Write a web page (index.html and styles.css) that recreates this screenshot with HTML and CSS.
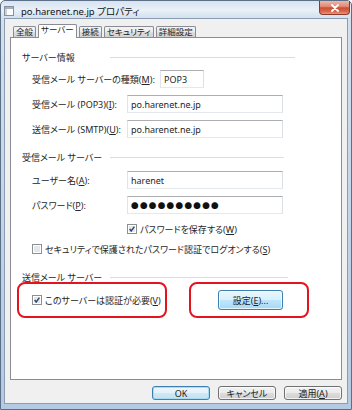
FILE: index.html
```html
<!DOCTYPE html>
<html lang="ja">
<head>
<meta charset="utf-8">
<title>po.harenet.ne.jp プロパティ</title>
<link rel="stylesheet" href="styles.css">
</head>
<body>
<div class="window">
  <div class="titlebar">
    <svg class="appicon" width="10" height="10" viewBox="0 0 10 10">
      <rect x="0.5" y="0.5" width="9" height="9" fill="#fdfdfd" stroke="#8a8f96"/>
      <rect x="1" y="1" width="8" height="2" fill="#9fb3c8"/>
      <rect x="1" y="3" width="2" height="6" fill="#c9d3dd"/>
    </svg>
    <span class="title">po.harenet.ne.jp プロパティ</span>
    <div class="close">
      <svg width="10" height="8" viewBox="0 0 10 8"><path d="M2 1 L8 7 M8 1 L2 7" stroke="#fff" stroke-width="1.8" stroke-linecap="round"/></svg>
    </div>
  </div>
  <div class="client">
    <div class="tabs">
      <div class="tab">全般</div>
      <div class="tab active">サーバー</div>
      <div class="tab">接続</div>
      <div class="tab">セキュリティ</div>
      <div class="tab">詳細設定</div>
    </div>
    <div class="panel">
      <div class="legend"><span class="legend-text">サーバー情報</span><span class="legend-line l1"></span></div>
      <div class="row">
        <span class="label wide">受信メール サーバーの種類(<u>M</u>):</span>
        <div class="field short">POP3</div>
      </div>
      <div class="row">
        <span class="label">受信メール (POP3)(<u>I</u>):</span>
        <div class="field">po.harenet.ne.jp</div>
      </div>
      <div class="row">
        <span class="label">送信メール (SMTP)(<u>U</u>):</span>
        <div class="field">po.harenet.ne.jp</div>
      </div>

      <div class="legend gap13"><span class="legend-text">受信メール サーバー</span><span class="legend-line l2"></span></div>
      <div class="row gap8">
        <span class="label">ユーザー名(<u>A</u>):</span>
        <div class="field">harenet</div>
      </div>
      <div class="row">
        <span class="label">パスワード(<u>P</u>):</span>
        <div class="field dots">●●●●●●●●●●</div>
      </div>
      <div class="check-row save">
        <svg class="cb" width="10" height="10" viewBox="0 0 10 10"><rect x="0.5" y="0.5" width="9" height="9" fill="#fff" stroke="#8e8f8f"/><rect x="2" y="2" width="6" height="6" fill="#e3e8ee"/><path d="M2.6 5 L4.2 7 L7.4 2.6" stroke="#32466e" stroke-width="1.4" fill="none"/></svg>
        <span>パスワードを保存する(<u>W</u>)</span>
      </div>
      <div class="check-row spa">
        <svg class="cb" width="10" height="10" viewBox="0 0 10 10"><rect x="0.5" y="0.5" width="9" height="9" fill="#fff" stroke="#8e8f8f"/><rect x="2" y="2" width="6" height="6" fill="#e3e8ee"/></svg>
        <span>セキュリティで保護されたパスワード認証でログオンする(<u>S</u>)</span>
      </div>

      <div class="legend gap16"><span class="legend-text">送信メール サーバー</span><span class="legend-line l3"></span></div>
      <div class="send-row">
        <div class="mark left">
          <div class="check-row">
            <svg class="cb" width="10" height="10" viewBox="0 0 10 10"><rect x="0.5" y="0.5" width="9" height="9" fill="#fff" stroke="#8e8f8f"/><rect x="2" y="2" width="6" height="6" fill="#e3e8ee"/><path d="M2.6 5 L4.2 7 L7.4 2.6" stroke="#32466e" stroke-width="1.4" fill="none"/></svg>
            <span>このサーバーは認証が必要(<u>V</u>)</span>
          </div>
        </div>
        <div class="mark right">
          <div class="btn hover settings">設定(<u>E</u>)...</div>
        </div>
      </div>
    </div>
    <div class="buttons">
      <div class="btn default">OK</div>
      <div class="btn">キャンセル</div>
      <div class="btn">適用(<u>A</u>)</div>
    </div>
  </div>
</div>
</body>
</html>
```

FILE: styles.css
```css
* { box-sizing: border-box; }

html, body {
  margin: 0;
  width: 352px;
  height: 410px;
  overflow: hidden;
  background: #fff;
}

body {
  font-family: "Noto Sans", "Noto Sans CJK JP", sans-serif;
  font-size: 9px;
  color: #262626;
  font-feature-settings: "palt";
}

u { text-decoration: underline; text-underline-offset: 1px; }

.window {
  width: 352px;
  height: 410px;
  display: flex;
  flex-direction: column;
  border: 1px solid #5b6f86;
  border-radius: 5px 5px 0 0;
  background: linear-gradient(180deg, #d8e3f0 0px, #e9f0f8 9px, #d3e0ee 17px, #bfd3e8 60%, #b3cae3 100%);
}

.titlebar {
  height: 17px;
  display: flex;
  align-items: center;
  padding-left: 3px;
}

.appicon { margin-right: 7px; margin-top: 2px; }

.title {
  font-size: 9.5px;
  color: #111;
  margin-top: 2px;
}

.close {
  margin-left: auto;
  margin-right: 1px;
  align-self: flex-start;
  width: 31px;
  height: 14px;
  border: 1px solid #8a3a2c;
  border-top: none;
  border-radius: 0 0 4px 4px;
  background: linear-gradient(180deg, #edb9ab 0%, #de8570 45%, #cc4e33 52%, #d9674a 80%, #e69a7c 100%);
  display: flex;
  align-items: center;
  justify-content: center;
}

.client {
  flex: 1;
  margin: 0 3px 5px;
  border: 1px solid #8a9db3;
  background: #f0f0f0;
  display: flex;
  flex-direction: column;
  padding: 5px 5px 3px;
}

.tabs {
  display: flex;
  align-items: flex-end;
  height: 13px;
  padding-left: 3px;
  gap: 2px;
  position: relative;
  z-index: 1;
  font-size: 8.5px;
}

.tab {
  height: 11px;
  padding: 0 2px;
  border: 1px solid #898c95;
  border-bottom: none;
  border-radius: 2px 2px 0 0;
  background: linear-gradient(180deg, #f4f4f4 0%, #ebebeb 50%, #dedede 51%, #d2d2d2 100%);
  display: flex;
  align-items: center;
  line-height: 1;
  color: #222;
}

.tab.active {
  height: 14px;
  margin-bottom: -1px;
  background: #fff;
  padding: 0 2px 2px;
}

.panel {
  flex: 1;
  background: #fff;
  border: 1px solid #898c95;
  padding: 13px 0 0 11px;
  display: flex;
  flex-direction: column;
}

.legend {
  display: flex;
  align-items: center;
  height: 12px;
}

.legend-text { width: 88px; white-space: nowrap; }

.legend-line { height: 1px; background: #d5dfe5; }
.legend-line.l1 { width: 185px; }
.legend-line.l2 { width: 174px; }
.legend-line.l3 { width: 178px; }

.gap13 { margin-top: 13px; }
.gap16 { margin-top: 16px; }

.row {
  display: flex;
  align-items: center;
  height: 18px;
  margin-top: 7px;
  padding-left: 10px;
}

.row.gap8 { margin-top: 8px; }

.label { width: 95px; white-space: nowrap; }
.label.wide { width: 128px; }

.field {
  width: 156px;
  height: 18px;
  border: 1px solid;
  border-color: #abadb3 #dbdfe6 #e3e9ef #e2e3ea;
  background: #fff;
  padding-left: 3px;
  display: flex;
  align-items: center;
  white-space: nowrap;
}

.field.short { width: 44px; }

.field.dots {
  font-size: 7.5px;
  letter-spacing: 1.4px;
  color: #111;
}

.check-row {
  display: flex;
  align-items: center;
  height: 12px;
  gap: 3px;
  white-space: nowrap;
}

.check-row.save { margin: 9px 0 0 105px; }
.check-row.spa { margin: 8px 0 0 10px; }

.cb { flex: none; }

.send-row {
  display: flex;
  gap: 22px;
  margin: -1px 0 0 -5px;
}

.mark {
  height: 36px;
  border: 2px solid #e3141e;
  border-radius: 8px;
  display: flex;
  align-items: center;
}

.mark.left { width: 150px; padding-left: 13px; }
.mark.right { width: 120px; padding-left: 27px; }

.btn {
  width: 58px;
  height: 14px;
  border: 1px solid #707070;
  border-radius: 3px;
  background: linear-gradient(180deg, #f2f2f2 0%, #ebebeb 50%, #dddddd 51%, #cfcfcf 100%);
  box-shadow: inset 0 0 0 1px rgba(255,255,255,0.7);
  display: flex;
  align-items: center;
  justify-content: center;
  white-space: nowrap;
  color: #222;
}

.btn.settings { width: 65px; height: 20px; }

.btn.hover {
  border-color: #3c7fb1;
  background: linear-gradient(180deg, #eaf6fd 0%, #d9f0fc 50%, #bee6fd 51%, #a7d9f5 100%);
}

.btn.default {
  border-color: #3c7fb1;
  box-shadow: inset 0 0 0 1px #a6dcf4;
  background: linear-gradient(180deg, #eef7fc 0%, #e3f1f9 50%, #d2e8f5 51%, #c4e0f0 100%);
}

.buttons {
  display: flex;
  justify-content: flex-end;
  gap: 8px;
  margin-top: 6px;
}
```
